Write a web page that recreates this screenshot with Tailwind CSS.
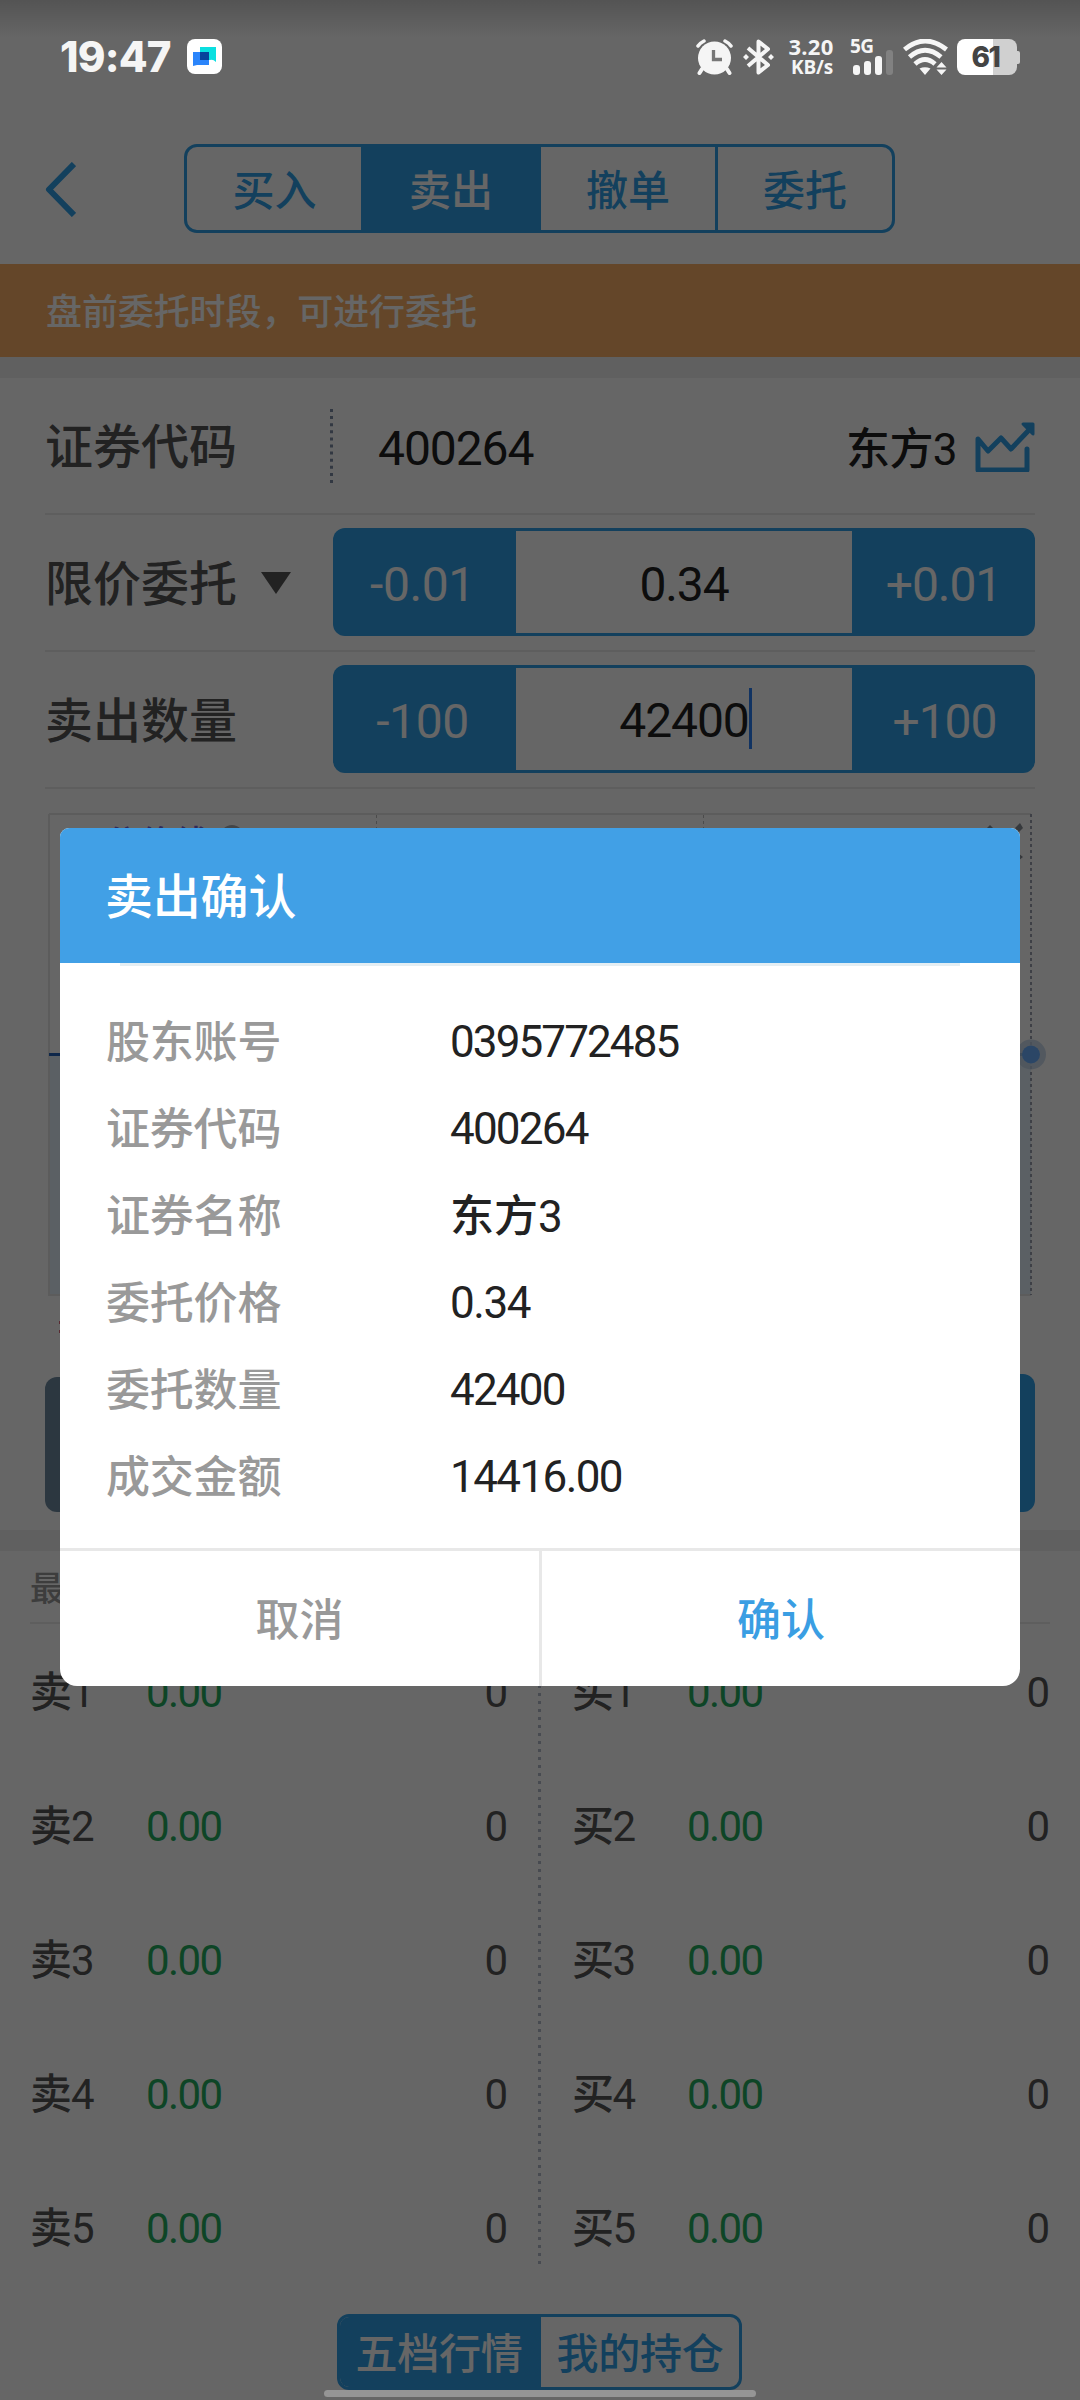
<!DOCTYPE html>
<html lang="zh-CN">
<head>
<meta charset="utf-8">
<title>卖出</title>
<script src="https://cdn.jsdelivr.net/npm/@tailwindcss/browser@4"></script>
</head>
<body class="bg-white">
<div class="relative w-[1080px] h-[2400px] overflow-hidden bg-white font-['Roboto','Noto_Sans_CJK_SC',sans-serif] font-medium text-[#555]">

  <!-- trading page -->
  <div class="flex flex-col h-full">
    <header class="flex h-[264px] pt-[144px] pl-[45px]">
      <svg class="mt-[18px] w-[31px] h-[55px]" viewBox="0 0 31 55" fill="none" stroke="#30a0e9" stroke-width="6" stroke-linejoin="round"><path d="M29 2 4 27.500 29 53"/></svg>
      <nav class="ml-[108px] flex w-[711px] h-[89px] rounded-[13px] border-[3px] border-[#30a0e9] overflow-hidden text-[42px] leading-[89px] text-[#30a0e9] text-center">
        <div class="w-[174px] pl-px">买入</div>
        <div class="w-[180px] bg-[#30a0e9] text-white">卖出</div>
        <div class="w-[177px] border-r-[3px] border-[#30a0e9]">撤单</div>
        <div class="w-[174px]">委托</div>
      </nav>
    </header>

    <div class="h-[93px] bg-[#faaf66] text-white text-[36px] leading-[98px] tracking-[-.1px] pl-[46px]">盘前委托时段，可进行委托</div>
    <div class="h-[21px] bg-[#f1f1f1]"></div>

    <div class="mx-[45px] h-[137px] border-b-2 border-[#eaeaea] flex items-center text-[#555]">
      <div class="w-[285px] pt-[5px] text-[48px]">证券代码</div>
      <svg class="w-[3px] h-[74px]" viewBox="0 0 3 74"><path d="M1.500 0V74" stroke="#7d8ca5" stroke-width="3" stroke-dasharray="3 4.100"/></svg>
      <div class="ml-[45px] pt-[7px] text-[48px] font-[450] tracking-[-1.1px] text-[#222]">400264</div>
      <div class="ml-auto pt-[8px] text-[44px] tracking-[-.6px] text-[#222]">东方<span class="font-[450]">3</span></div>
      <svg class="ml-[18px] mt-[2px] w-[60px] h-[50px]" viewBox="0 0 60 50" fill="none" stroke="#30a0e9" stroke-width="5" stroke-linejoin="round" stroke-linecap="round"><path d="M52 27V48H3V17L13 29 26 16 36 27 54 8"/><path d="M48 2H58V12Z" fill="#30a0e9" stroke-width="3"/></svg>
    </div>

    <div class="mx-[45px] h-[137px] border-b-2 border-[#eaeaea] flex items-center text-[48px]">
      <div class="w-[288px] flex items-center"><span class="pt-[5px]">限价委托</span>
        <svg class="ml-[24px] w-[30px] h-[22px]" viewBox="0 0 30 22"><path d="M0 0H30L15 22Z" fill="#555"/></svg>
      </div>
      <div class="mb-[2px] flex w-[702px] h-[108px] rounded-[12px] bg-[#30a0e9] overflow-hidden text-center text-white font-[450] leading-[113px] tracking-[-1.1px]">
        <div class="w-[183px] pr-[4px] tracking-[-.4px]">-0.01</div>
        <div class="w-[336px] my-[3px] bg-white text-[#222] leading-[107px]">0.34</div>
        <div class="w-[183px]">+0.01</div>
      </div>
    </div>

    <div class="mx-[45px] h-[137px] border-b-2 border-[#eaeaea] flex items-center text-[48px]">
      <div class="w-[288px] pt-[5px]">卖出数量</div>
      <div class="mb-[2px] flex w-[702px] h-[108px] rounded-[12px] bg-[#30a0e9] overflow-hidden text-center text-white font-[450] leading-[113px] tracking-[-1.1px]">
        <div class="w-[183px] pr-[4px] tracking-[-.4px]">-100</div>
        <div class="w-[336px] my-[3px] bg-white text-[#222] leading-[102px] flex justify-center items-center"><span class="pt-[5px]">42400</span><span class="-mr-[3px] w-[3px] h-[61px] bg-[#2b7ff5]"></span></div>
        <div class="w-[183px] pl-[2px]">+100</div>
      </div>
    </div>

    <!-- price chart -->
    <svg class="w-[1080px] h-[585px] shrink-0" viewBox="0 789 1080 585" fill="none">
      <path d="M49 1056H1031V1295H49Z" fill="#e3f1fb"/>
      <path d="M49 814H1031M49 814V1295H1031" stroke="#e6e6e6" stroke-width="2"/>
      <path d="M376.500 815V1295M703.500 815V1295" stroke="#bbb" stroke-dasharray="3 3"/>
      <path d="M1031 814V1295" stroke="#9ba0ae" stroke-width="2" stroke-dasharray="3 3"/>
      <path d="M49 1054.500H1031" stroke="#2563b8" stroke-width="3"/>
      <circle cx="1031" cy="1054.500" r="15" fill="#c0d3e8" fill-opacity=".8"/>
      <circle cx="1031" cy="1054.500" r="9" fill="#6cb0ff"/>
      <text x="104" y="856" font-size="35" fill="#7c66e0">分价线</text>
      <circle cx="232" cy="837" r="12" fill="#a9adb3"/>
      <path d="M986 829 990 825 994 829M1015 828 1020 823 1023 828 1019 832ZM1018 853 1023 857 1018 861" fill="#888e96"/>
      <path d="M59 1321H61V1324H59ZM59 1330H61V1333H59Z" fill="#e06a7a"/>
    </svg>
    <div class="mx-[45px] h-[156px] pb-[18px] flex items-end">
      <div class="w-[495px] h-[135px] rounded-[12px] bg-[#6e8aa0]"></div>
      <div class="w-[495px] h-[138px] rounded-[12px] bg-[#30a0e9]"></div>
    </div>
    <div class="h-[21px] bg-[#f1f1f1]"></div>
    <div class="h-[73px] mx-[30px] border-b-2 border-[#eaeaea] text-[34px] leading-[76px] text-[#999]">最新</div>

    <!-- five-level order book -->
    <div class="flex h-[641px] text-[42px]">
      <div class="w-[538px] pl-[30px] pr-[30px] flex flex-col leading-[134px] pt-[2px]">
        <div class="h-[134px] flex"><span class="w-[116px] tracking-[-1px]">卖<span class="font-[450]">1</span></span><span class="font-[450] text-[#25ad60] tracking-[-1.600px]">0.00</span><span class="ml-auto font-[450]">0</span></div>
        <div class="h-[134px] flex"><span class="w-[116px] tracking-[-1px]">卖<span class="font-[450]">2</span></span><span class="font-[450] text-[#25ad60] tracking-[-1.600px]">0.00</span><span class="ml-auto font-[450]">0</span></div>
        <div class="h-[134px] flex"><span class="w-[116px] tracking-[-1px]">卖<span class="font-[450]">3</span></span><span class="font-[450] text-[#25ad60] tracking-[-1.600px]">0.00</span><span class="ml-auto font-[450]">0</span></div>
        <div class="h-[134px] flex"><span class="w-[116px] tracking-[-1px]">卖<span class="font-[450]">4</span></span><span class="font-[450] text-[#25ad60] tracking-[-1.600px]">0.00</span><span class="ml-auto font-[450]">0</span></div>
        <div class="h-[134px] flex"><span class="w-[116px] tracking-[-1px]">卖<span class="font-[450]">5</span></span><span class="font-[450] text-[#25ad60] tracking-[-1.600px]">0.00</span><span class="ml-auto font-[450]">0</span></div>
      </div>
      <svg class="w-[3px] h-[641px]" viewBox="0 0 3 641"><path d="M1.500 5V641" stroke="#b3bbca" stroke-width="3" stroke-dasharray="3 5"/></svg>
      <div class="w-[539px] pl-[31px] pr-[30px] flex flex-col leading-[134px] pt-[2px]">
        <div class="h-[134px] flex"><span class="w-[115px] tracking-[-1.500px]">买<span class="font-[450]">1</span></span><span class="font-[450] text-[#25ad60] tracking-[-1.600px]">0.00</span><span class="ml-auto font-[450]">0</span></div>
        <div class="h-[134px] flex"><span class="w-[115px] tracking-[-1.500px]">买<span class="font-[450]">2</span></span><span class="font-[450] text-[#25ad60] tracking-[-1.600px]">0.00</span><span class="ml-auto font-[450]">0</span></div>
        <div class="h-[134px] flex"><span class="w-[115px] tracking-[-1.500px]">买<span class="font-[450]">3</span></span><span class="font-[450] text-[#25ad60] tracking-[-1.600px]">0.00</span><span class="ml-auto font-[450]">0</span></div>
        <div class="h-[134px] flex"><span class="w-[115px] tracking-[-1.500px]">买<span class="font-[450]">4</span></span><span class="font-[450] text-[#25ad60] tracking-[-1.600px]">0.00</span><span class="ml-auto font-[450]">0</span></div>
        <div class="h-[134px] flex"><span class="w-[115px] tracking-[-1.500px]">买<span class="font-[450]">5</span></span><span class="font-[450] text-[#25ad60] tracking-[-1.600px]">0.00</span><span class="ml-auto font-[450]">0</span></div>
      </div>
    </div>

    <div class="mt-[49px] ml-[337px] flex w-[405px] h-[76px] rounded-[12px] border-[3px] border-[#30a0e9] overflow-hidden text-[42px] leading-[75px] tracking-[-.2px] text-center text-[#30a0e9]">
      <div class="w-[201px] pr-[3px] bg-[#30a0e9] text-white">五档行情</div>
      <div class="w-[198px]">我的持仓</div>
    </div>
  </div>

  <!-- scrim and confirm dialog -->
  <div class="absolute inset-0 bg-black/60 pt-[828px]">
    <section class="mx-auto w-[960px] h-[858px] bg-white rounded-t-[9px] rounded-b-[17px] overflow-hidden flex flex-col">
      <h1 class="h-[135px] bg-[#41a0e6] text-white text-[48px] leading-[139px] tracking-[-.2px] pl-[45px]">卖出确认</h1>
      <div class="mx-[60px] h-[3px] bg-[#e4eef3]"></div>
      <dl class="grid grid-cols-[344px_1fr] auto-rows-[87px] leading-[87px] h-[582px] pt-[34px] pl-[46px] text-[44px] text-[#222]">
        <dt class="text-[#999] tracking-[-.2px]">股东账号</dt><dd class="font-[450] -mt-px tracking-[-1.900px]">0395772485</dd>
        <dt class="text-[#999] tracking-[-.2px]">证券代码</dt><dd class="font-[450] -mt-px tracking-[-1.800px]">400264</dd>
        <dt class="text-[#999] tracking-[-.2px]">证券名称</dt><dd>东方<span class="font-[450]">3</span></dd>
        <dt class="text-[#999] tracking-[-.2px]">委托价格</dt><dd class="font-[450] -mt-px tracking-[-1.400px]">0.34</dd>
        <dt class="text-[#999] tracking-[-.2px]">委托数量</dt><dd class="font-[450] -mt-px tracking-[-1.800px]">42400</dd>
        <dt class="text-[#999] tracking-[-.2px]">成交金额</dt><dd class="font-[450] -mt-px tracking-[-1.600px]">14416.00</dd>
      </dl>
      <div class="flex h-[138px] border-t-[3px] border-[#e8e8e8] text-[44px] leading-[140px] text-center">
        <div class="w-[482px] border-r-[3px] border-[#e8e8e8] text-[#999]">取消</div>
        <div class="w-[478px] text-[#3a9ee3]">确认</div>
      </div>
    </section>
  </div>

  <!-- system status bar -->
  <div class="absolute inset-x-0 top-0 h-[76px] pt-[39px] pl-[60px] pr-[60px] flex bg-linear-to-b from-black/18 to-transparent to-[38px] text-[#f5f5f5]">
    <div class="w-[127px] h-[36px] font-['Inter'] font-extrabold text-[42px] leading-[36px] tracking-[-.800px]">19:47</div>
    <svg class="w-[35px] h-[35px]" viewBox="0 0 35 35"><rect width="35" height="35" rx="8" fill="#fff"/><path d="M13 8H29V23Q26 20 23 21H13Z" fill="#0bdfe0"/><path d="M6 13H22V26H10L6 27Z" fill="#2b85fb"/><path d="M13 13H22V21H13Z" fill="#06439b"/></svg>
    <svg class="ml-auto w-[37px] h-[36px]" viewBox="0 0 37 36" fill="none" stroke="#f5f5f5" stroke-linecap="round"><path d="M6 30 3.500 34M31 30 33.500 34" stroke-width="4"/><path d="M2 7Q4 4 8 2M35 7Q33 4 29 2" stroke-width="3.500"/><circle cx="18.500" cy="19" r="16.500" fill="#f5f5f5" stroke="none"/><path d="M17.500 11V20.500H26" stroke="#777" stroke-width="3.300" stroke-linecap="butt"/></svg>
    <svg class="ml-[10px] w-[31px] h-[36px]" viewBox="0 0 31 36" fill="none" stroke="#f5f5f5" stroke-width="4" stroke-linejoin="round"><path d="M5 9 25 26 15.500 33.500V2.500L25 10 5 27"/><path d="M3 15 6 18 3 21 0 18ZM28 15 31 18 28 21 25 18Z" fill="#f5f5f5" stroke="none"/></svg>
    <div class="ml-[12px] w-[50px] h-[36px] flex flex-col items-center justify-between font-['Open_Sans'] font-bold"><div class="text-[22px] leading-[14px] tracking-[.2px]">3.20</div><div class="text-[19px] leading-[15px] tracking-[-.2px] pl-[2px]">KB/s</div></div>
    <div class="ml-[14px] w-[44px] h-[36px] flex flex-col font-['Open_Sans'] font-bold">
      <div class="text-[19px] leading-[15px] h-[11px] tracking-[-.5px]">5G</div>
      <div class="flex items-end gap-[4px] pl-[3px] h-[25px]"><i class="w-[7px] h-[10px] rounded-[3px] bg-[#f5f5f5]"></i><i class="w-[7px] h-[14px] rounded-[3px] bg-[#f5f5f5]"></i><i class="w-[7px] h-[19px] rounded-[3px] bg-[#f5f5f5]"></i><i class="w-[7px] h-[25px] rounded-[3px] bg-[#818181]"></i></div>
    </div>
    <svg class="ml-[9px] w-[45px] h-[36px]" viewBox="0 0 45 36" fill="none" stroke="#f5f5f5" stroke-width="4.800"><path d="M1.500 10.500Q22 -6.500 43.500 10.500M6.500 18Q22 4.500 38 18M12 25Q22 16 32 25"/><path d="M16.500 29.500Q22 27 27.500 29.500L22 36ZM33.500 28.500 38.500 23 43.500 28.500ZM33.500 30.500H43.500L38.500 36Z" fill="#f5f5f5" stroke="none"/></svg>
    <div class="ml-[9px] flex items-center w-[63px] h-[36px]">
      <div class="w-[60px] h-[36px] rounded-[8px] bg-linear-to-r from-white from-[36px] to-[#d0d0d0] to-[36px] text-[#444] font-['Inter'] font-extrabold text-[28px] leading-[37px] pr-[3px] text-center tracking-[-1.500px]">61</div>
      <div class="w-[3px] h-[13px] bg-[#d0d0d0] rounded-r-[2px]"></div>
    </div>
  </div>

  <!-- home indicator -->
  <div class="absolute left-[324px] top-[2390px] w-[432px] h-[7px] rounded-full bg-[#959595]"></div>
</div>
</body>
</html>
